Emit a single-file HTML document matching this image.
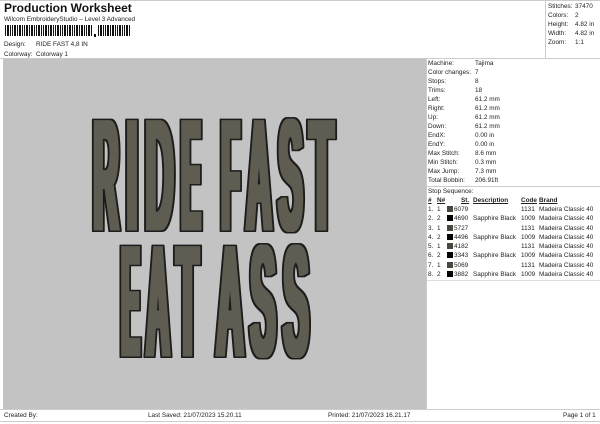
<!DOCTYPE html>
<html><head><style>
*{margin:0;padding:0;box-sizing:border-box}
body{width:600px;height:424px;background:#fff;font-family:"Liberation Sans",sans-serif;color:#222;position:relative;overflow:hidden}
.a{position:absolute;white-space:nowrap;font-size:6.4px;line-height:9px}
.u{text-decoration:underline;font-weight:bold}
</style></head><body>
<div class="a" style="left:4px;top:1px;font-size:12px;line-height:14px;font-weight:bold;color:#111">Production Worksheet</div>
<div class="a" style="left:4px;top:15px">Wilcom EmbroideryStudio – Level 3 Advanced</div>
<svg style="position:absolute;left:5px;top:25px" width="128" height="12">
<g fill="#111">
<rect x="0" y="0" width="1" height="11"/><rect x="2" y="0" width="2" height="11"/><rect x="5" y="0" width="1" height="11"/><rect x="7" y="0" width="1" height="11"/><rect x="9" y="0" width="2" height="11"/><rect x="12" y="0" width="1" height="11"/><rect x="14" y="0" width="2" height="11"/><rect x="17" y="0" width="1" height="11"/><rect x="19" y="0" width="1" height="11"/><rect x="21" y="0" width="2" height="11"/><rect x="24" y="0" width="1" height="11"/><rect x="26" y="0" width="2" height="11"/><rect x="29" y="0" width="1" height="11"/><rect x="31" y="0" width="1" height="11"/><rect x="33" y="0" width="2" height="11"/><rect x="36" y="0" width="1" height="11"/><rect x="38" y="0" width="1" height="11"/><rect x="40" y="0" width="2" height="11"/><rect x="43" y="0" width="1" height="11"/><rect x="45" y="0" width="2" height="11"/><rect x="48" y="0" width="1" height="11"/><rect x="50" y="0" width="1" height="11"/><rect x="52" y="0" width="2" height="11"/><rect x="55" y="0" width="1" height="11"/><rect x="57" y="0" width="1" height="11"/><rect x="59" y="0" width="2" height="11"/><rect x="62" y="0" width="1" height="11"/><rect x="64" y="0" width="2" height="11"/><rect x="67" y="0" width="1" height="11"/><rect x="69" y="0" width="1" height="11"/><rect x="71" y="0" width="2" height="11"/><rect x="74" y="0" width="1" height="11"/><rect x="76" y="0" width="2" height="11"/><rect x="79" y="0" width="1" height="11"/><rect x="81" y="0" width="1" height="11"/><rect x="83" y="0" width="2" height="11"/><rect x="86" y="0" width="1" height="11"/><rect x="89" y="9" width="2" height="3"/><rect x="93" y="0" width="1" height="11"/><rect x="95" y="0" width="2" height="11"/><rect x="98" y="0" width="1" height="11"/><rect x="100" y="0" width="1" height="11"/><rect x="102" y="0" width="2" height="11"/><rect x="105" y="0" width="1" height="11"/><rect x="107" y="0" width="2" height="11"/><rect x="110" y="0" width="1" height="11"/><rect x="112" y="0" width="1" height="11"/><rect x="114" y="0" width="2" height="11"/><rect x="117" y="0" width="1" height="11"/><rect x="119" y="0" width="1" height="11"/><rect x="121" y="0" width="2" height="11"/><rect x="124" y="0" width="1" height="11"/>
</g></svg>
<div class="a" style="left:4px;top:40px">Design:</div><div class="a" style="left:36px;top:40px">RIDE FAST 4,8 IN</div>
<div class="a" style="left:4px;top:50px">Colorway:</div><div class="a" style="left:36px;top:50px">Colorway 1</div>
<div style="position:absolute;left:0;top:0;width:600px;height:1px;background:#ccc"></div>
<div style="position:absolute;left:545px;top:0;width:1px;height:59px;background:#ccc"></div>
<div style="position:absolute;left:0;top:58px;width:600px;height:1px;background:#ccc"></div>
<div class="a" style="left:548px;top:2px">Stitches:</div><div class="a" style="left:575px;top:2px">37470</div>
<div class="a" style="left:548px;top:11px">Colors:</div><div class="a" style="left:575px;top:11px">2</div>
<div class="a" style="left:548px;top:20px">Height:</div><div class="a" style="left:575px;top:20px">4.82 in</div>
<div class="a" style="left:548px;top:29px">Width:</div><div class="a" style="left:575px;top:29px">4.82 in</div>
<div class="a" style="left:548px;top:38px">Zoom:</div><div class="a" style="left:575px;top:38px">1:1</div>
<div style="position:absolute;left:3px;top:59px;width:423px;height:350px;background:#c3c3c3"></div>
<svg style="position:absolute;left:0;top:0" width="600" height="424">
<defs>
<filter id="d1" x="-20%" y="-5%" width="140%" height="110%"><feMorphology operator="dilate" radius="3.5 0"/></filter>
<filter id="d2" x="-20%" y="-5%" width="140%" height="110%"><feMorphology operator="dilate" radius="2 0"/></filter>
</defs>
<g font-family="Liberation Sans, sans-serif" font-weight="bold" font-size="159" stroke-linejoin="round">
<g fill="#1e1e1c" stroke="#1e1e1c" stroke-width="4" filter="url(#d1)">
<text x="93.5" y="230" textLength="25" lengthAdjust="spacingAndGlyphs">R</text>
<text x="126.5" y="230" textLength="11" lengthAdjust="spacingAndGlyphs">I</text>
<text x="145.5" y="230" textLength="28" lengthAdjust="spacingAndGlyphs">D</text>
<text x="181.5" y="230" textLength="19" lengthAdjust="spacingAndGlyphs">E</text>
<text x="221.5" y="230" textLength="18" lengthAdjust="spacingAndGlyphs">F</text>
<text x="246.5" y="230" textLength="25" lengthAdjust="spacingAndGlyphs">A</text>
<text x="278.5" y="230" textLength="24" lengthAdjust="spacingAndGlyphs">S</text>
<text x="309.5" y="230" textLength="24" lengthAdjust="spacingAndGlyphs">T</text>
<text x="121.5" y="356" textLength="18" lengthAdjust="spacingAndGlyphs">E</text>
<text x="146.5" y="356" textLength="23" lengthAdjust="spacingAndGlyphs">A</text>
<text x="176.5" y="356" textLength="22" lengthAdjust="spacingAndGlyphs">T</text>
<text x="216.5" y="356" textLength="27" lengthAdjust="spacingAndGlyphs">A</text>
<text x="250.5" y="356" textLength="25" lengthAdjust="spacingAndGlyphs">S</text>
<text x="283.5" y="356" textLength="25" lengthAdjust="spacingAndGlyphs">S</text>
</g>
<g fill="#5f5c51" stroke="#5f5c51" stroke-width="1" filter="url(#d2)">
<text x="93.5" y="230" textLength="25" lengthAdjust="spacingAndGlyphs">R</text>
<text x="126.5" y="230" textLength="11" lengthAdjust="spacingAndGlyphs">I</text>
<text x="145.5" y="230" textLength="28" lengthAdjust="spacingAndGlyphs">D</text>
<text x="181.5" y="230" textLength="19" lengthAdjust="spacingAndGlyphs">E</text>
<text x="221.5" y="230" textLength="18" lengthAdjust="spacingAndGlyphs">F</text>
<text x="246.5" y="230" textLength="25" lengthAdjust="spacingAndGlyphs">A</text>
<text x="278.5" y="230" textLength="24" lengthAdjust="spacingAndGlyphs">S</text>
<text x="309.5" y="230" textLength="24" lengthAdjust="spacingAndGlyphs">T</text>
<text x="121.5" y="356" textLength="18" lengthAdjust="spacingAndGlyphs">E</text>
<text x="146.5" y="356" textLength="23" lengthAdjust="spacingAndGlyphs">A</text>
<text x="176.5" y="356" textLength="22" lengthAdjust="spacingAndGlyphs">T</text>
<text x="216.5" y="356" textLength="27" lengthAdjust="spacingAndGlyphs">A</text>
<text x="250.5" y="356" textLength="25" lengthAdjust="spacingAndGlyphs">S</text>
<text x="283.5" y="356" textLength="25" lengthAdjust="spacingAndGlyphs">S</text>
</g>
</g></svg>
<div style="position:absolute;left:426px;top:59px;width:1px;height:350px;background:#ccc"></div>
<div class="a" style="left:428px;top:59px">Machine:</div><div class="a" style="left:475px;top:59px">Tajima</div>
<div class="a" style="left:428px;top:68px">Color changes:</div><div class="a" style="left:475px;top:68px">7</div>
<div class="a" style="left:428px;top:77px">Stops:</div><div class="a" style="left:475px;top:77px">8</div>
<div class="a" style="left:428px;top:86px">Trims:</div><div class="a" style="left:475px;top:86px">18</div>
<div class="a" style="left:428px;top:95px">Left:</div><div class="a" style="left:475px;top:95px">61.2 mm</div>
<div class="a" style="left:428px;top:104px">Right:</div><div class="a" style="left:475px;top:104px">61.2 mm</div>
<div class="a" style="left:428px;top:113px">Up:</div><div class="a" style="left:475px;top:113px">61.2 mm</div>
<div class="a" style="left:428px;top:122px">Down:</div><div class="a" style="left:475px;top:122px">61.2 mm</div>
<div class="a" style="left:428px;top:131px">EndX:</div><div class="a" style="left:475px;top:131px">0.00 in</div>
<div class="a" style="left:428px;top:140px">EndY:</div><div class="a" style="left:475px;top:140px">0.00 in</div>
<div class="a" style="left:428px;top:149px">Max Stitch:</div><div class="a" style="left:475px;top:149px">8.6 mm</div>
<div class="a" style="left:428px;top:158px">Min Stitch:</div><div class="a" style="left:475px;top:158px">0.3 mm</div>
<div class="a" style="left:428px;top:167px">Max Jump:</div><div class="a" style="left:475px;top:167px">7.3 mm</div>
<div class="a" style="left:428px;top:176px">Total Bobbin:</div><div class="a" style="left:475px;top:176px">206.91ft</div>
<div style="position:absolute;left:427px;top:186px;width:173px;height:1px;background:#ccc"></div>
<div class="a" style="left:428px;top:187px">Stop Sequence:</div>
<div class="a u" style="left:428px;top:196px">#</div><div class="a u" style="left:437px;top:196px">N#</div><div class="a u" style="left:461px;top:196px">St.</div><div class="a u" style="left:473px;top:196px">Description</div><div class="a u" style="left:521px;top:196px">Code</div><div class="a u" style="left:539px;top:196px">Brand</div>
<div style="position:absolute;left:427px;top:205px">
<div style="position:relative;height:9.3px"><span class="a" style="left:1px">1.</span><span class="a" style="left:10px">1</span><span style="position:absolute;left:20px;top:1px;width:6px;height:6px;background:#4a4740"></span><span class="a" style="left:27px">6079</span><span class="a" style="left:94px">1131</span><span class="a" style="left:112px">Madeira Classic 40</span></div>
<div style="position:relative;height:9.3px"><span class="a" style="left:1px">2.</span><span class="a" style="left:10px">2</span><span style="position:absolute;left:20px;top:1px;width:6px;height:6px;background:#000"></span><span class="a" style="left:27px">4690</span><span class="a" style="left:46px">Sapphire Black</span><span class="a" style="left:94px">1009</span><span class="a" style="left:112px">Madeira Classic 40</span></div>
<div style="position:relative;height:9.3px"><span class="a" style="left:1px">3.</span><span class="a" style="left:10px">1</span><span style="position:absolute;left:20px;top:1px;width:6px;height:6px;background:#4a4740"></span><span class="a" style="left:27px">5727</span><span class="a" style="left:94px">1131</span><span class="a" style="left:112px">Madeira Classic 40</span></div>
<div style="position:relative;height:9.3px"><span class="a" style="left:1px">4.</span><span class="a" style="left:10px">2</span><span style="position:absolute;left:20px;top:1px;width:6px;height:6px;background:#000"></span><span class="a" style="left:27px">4496</span><span class="a" style="left:46px">Sapphire Black</span><span class="a" style="left:94px">1009</span><span class="a" style="left:112px">Madeira Classic 40</span></div>
<div style="position:relative;height:9.3px"><span class="a" style="left:1px">5.</span><span class="a" style="left:10px">1</span><span style="position:absolute;left:20px;top:1px;width:6px;height:6px;background:#4a4740"></span><span class="a" style="left:27px">4182</span><span class="a" style="left:94px">1131</span><span class="a" style="left:112px">Madeira Classic 40</span></div>
<div style="position:relative;height:9.3px"><span class="a" style="left:1px">6.</span><span class="a" style="left:10px">2</span><span style="position:absolute;left:20px;top:1px;width:6px;height:6px;background:#000"></span><span class="a" style="left:27px">3343</span><span class="a" style="left:46px">Sapphire Black</span><span class="a" style="left:94px">1009</span><span class="a" style="left:112px">Madeira Classic 40</span></div>
<div style="position:relative;height:9.3px"><span class="a" style="left:1px">7.</span><span class="a" style="left:10px">1</span><span style="position:absolute;left:20px;top:1px;width:6px;height:6px;background:#4a4740"></span><span class="a" style="left:27px">5069</span><span class="a" style="left:94px">1131</span><span class="a" style="left:112px">Madeira Classic 40</span></div>
<div style="position:relative;height:9.3px"><span class="a" style="left:1px">8.</span><span class="a" style="left:10px">2</span><span style="position:absolute;left:20px;top:1px;width:6px;height:6px;background:#000"></span><span class="a" style="left:27px">3882</span><span class="a" style="left:46px">Sapphire Black</span><span class="a" style="left:94px">1009</span><span class="a" style="left:112px">Madeira Classic 40</span></div>
</div>
<div style="position:absolute;left:427px;top:280px;width:173px;height:1px;background:#ddd"></div>
<div style="position:absolute;left:0;top:409px;width:600px;height:1px;background:#ccc"></div>
<div style="position:absolute;left:0;top:421px;width:600px;height:1px;background:#ccc"></div>
<div class="a" style="left:4px;top:411px">Created By:</div>
<div class="a" style="left:148px;top:411px">Last Saved: 21/07/2023 15.20.11</div>
<div class="a" style="left:328px;top:411px">Printed: 21/07/2023 16.21.17</div>
<div class="a" style="left:563px;top:411px">Page 1 of 1</div>
</body></html>
